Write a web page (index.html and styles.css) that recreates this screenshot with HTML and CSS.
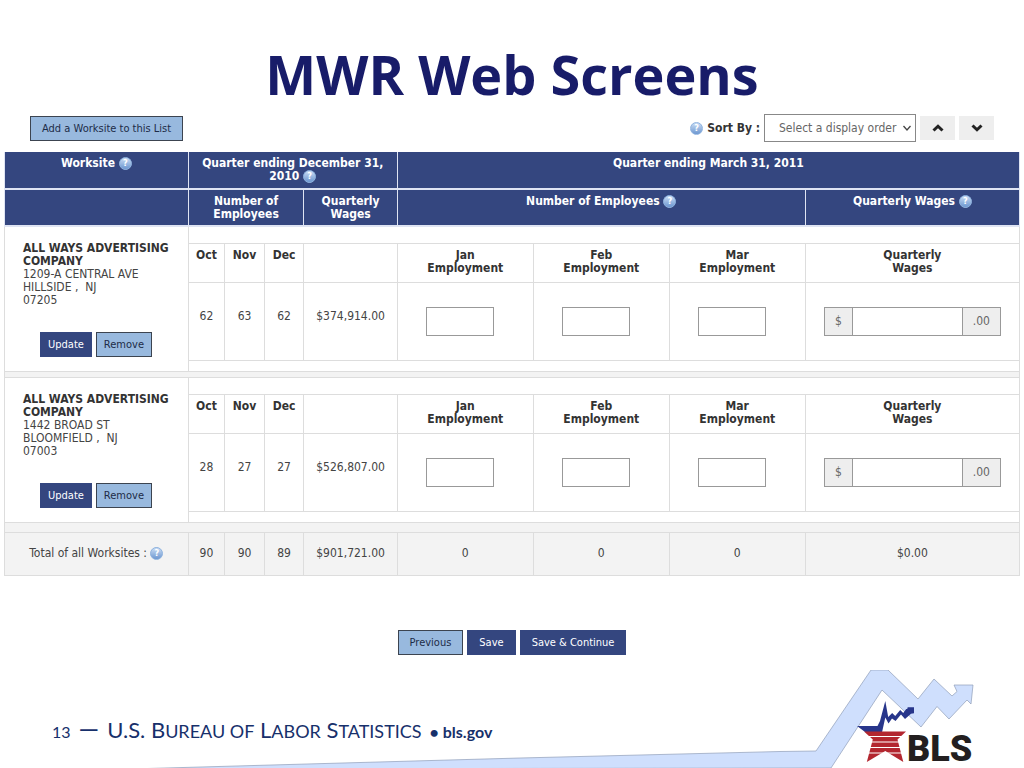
FILE: index.html
```html
<!DOCTYPE html>
<html lang="en">
<head>
<meta charset="utf-8">
<meta name="viewport" content="width=device-width, initial-scale=1">
<title>MWR Web Screens</title>
<link rel="stylesheet" href="styles.css">
</head>
<body>
<div class="slide">
  <h1 class="title">MWR Web Screens</h1>
  <main class="screen">
    <div class="toolbar">
      <button type="button" class="btn btn-light">Add a Worksite to this List</button>
      <div class="sort">
        <button type="button" class="help" aria-label="Help with sorting">?</button>
        <label class="sort-label" for="sort">Sort By :</label>
        <div class="select-wrap">
          <select id="sort" class="select"><option>Select a display order</option></select>
          <svg class="select-arrow" viewBox="0 0 10 10" aria-hidden="true"><path d="M1.500 3l3.500 4 3.500-4" fill="none" stroke="#444" stroke-width="1.300"/></svg>
        </div>
        <button type="button" class="order" aria-label="Ascending"><svg viewBox="0 0 12 10"><path d="M1.500 7.500L6 3.200l4.500 4.300" fill="none" stroke="#222" stroke-width="3"/></svg></button>
        <button type="button" class="order" aria-label="Descending"><svg viewBox="0 0 12 10"><path d="M1.500 2.500L6 6.800l4.500-4.300" fill="none" stroke="#222" stroke-width="3"/></svg></button>
      </div>
    </div>

    <table class="grid">
      <colgroup>
        <col class="c-site"><col class="c-oct"><col class="c-month"><col class="c-month"><col class="c-wage"><col class="c-emp"><col class="c-emp"><col class="c-emp"><col>
      </colgroup>
      <thead>
        <tr class="head">
          <th>Worksite <button type="button" class="help" aria-label="Help with worksite">?</button></th>
          <th colspan="4">Quarter ending December 31,<br>2010 <button type="button" class="help" aria-label="Help with prior quarter">?</button></th>
          <th colspan="4">Quarter ending March 31, 2011</th>
        </tr>
        <tr class="head">
          <th></th>
          <th colspan="3">Number of<br>Employees</th>
          <th>Quarterly<br>Wages</th>
          <th colspan="3">Number of Employees <button type="button" class="help" aria-label="Help with employees">?</button></th>
          <th>Quarterly Wages <button type="button" class="help" aria-label="Help with wages">?</button></th>
        </tr>
      </thead>
      <tbody>
        <tr class="space-top"><td rowspan="4" class="site">
          <address class="address"><strong>ALL WAYS ADVERTISING COMPANY</strong><br>1209-A CENTRAL AVE<br>HILLSIDE ,&nbsp; NJ<br>07205</address>
          <div class="site-actions"><button type="button" class="btn btn-dark">Update</button><button type="button" class="btn btn-light">Remove</button></div>
        </td><td colspan="8"></td></tr>
        <tr class="labels"><th>Oct</th><th>Nov</th><th>Dec</th><th></th><th>Jan<br>Employment</th><th>Feb<br>Employment</th><th>Mar<br>Employment</th><th>Quarterly<br>Wages</th></tr>
        <tr class="values"><td>62</td><td>63</td><td>62</td><td>$374,914.00</td>
          <td><input class="num" type="text" aria-label="January employment"></td>
          <td><input class="num" type="text" aria-label="February employment"></td>
          <td><input class="num" type="text" aria-label="March employment"></td>
          <td><div class="money"><span>$</span><input type="text" aria-label="Quarterly wages"><span>.00</span></div></td></tr>
        <tr class="space-bottom"><td colspan="8"></td></tr>
        <tr class="band"><td colspan="9"></td></tr>
      </tbody>
      <tbody>
        <tr class="space-top"><td rowspan="4" class="site">
          <address class="address"><strong>ALL WAYS ADVERTISING COMPANY</strong><br>1442 BROAD ST<br>BLOOMFIELD ,&nbsp; NJ<br>07003</address>
          <div class="site-actions"><button type="button" class="btn btn-dark">Update</button><button type="button" class="btn btn-light">Remove</button></div>
        </td><td colspan="8"></td></tr>
        <tr class="labels"><th>Oct</th><th>Nov</th><th>Dec</th><th></th><th>Jan<br>Employment</th><th>Feb<br>Employment</th><th>Mar<br>Employment</th><th>Quarterly<br>Wages</th></tr>
        <tr class="values"><td>28</td><td>27</td><td>27</td><td>$526,807.00</td>
          <td><input class="num" type="text" aria-label="January employment"></td>
          <td><input class="num" type="text" aria-label="February employment"></td>
          <td><input class="num" type="text" aria-label="March employment"></td>
          <td><div class="money"><span>$</span><input type="text" aria-label="Quarterly wages"><span>.00</span></div></td></tr>
        <tr class="space-bottom"><td colspan="8"></td></tr>
        <tr class="band band-tall"><td colspan="9"></td></tr>
      </tbody>
      <tfoot>
        <tr class="total"><td>Total of all Worksites : <button type="button" class="help" aria-label="Help with totals">?</button></td><td>90</td><td>90</td><td>89</td><td>$901,721.00</td><td>0</td><td>0</td><td>0</td><td>$0.00</td></tr>
      </tfoot>
    </table>

    <div class="actions">
      <button type="button" class="btn btn-light">Previous</button>
      <button type="button" class="btn btn-dark">Save</button>
      <button type="button" class="btn btn-dark">Save &amp; Continue</button>
    </div>
  </main>

  <footer class="footer">
    <svg class="art" viewBox="0 0 1024 98" preserveAspectRatio="xMaxYMax meet" role="img" aria-label="BLS">
      <path d="M130 99L520 88 780 81.500 816 81 871 0h17l30 29 16-20 18 17 5-4.500-3-6.500h19l-2 19-4-4-18 19-12-12.500-16 20.500-39-37-51 78z" fill="#cfdffd" stroke="#8f9db8" stroke-width=".7"/>
      <path d="M857 56h20.500l2.500-5 5.300-20 2.900 16 4-4 3 3 5-6 3 3 3-4h1l.5-1.700h6.300v6l-3 .5-6 5.200-4-4.500-5.500 6.500-3.500-2.500-3.500 5-3.200-6-3.200 14.500h-17z" fill="#28368b"/>
      <path d="M864 61.500h42l-8.500 8 5.800 22.500-18-11-18.500 11 6-22.500z" fill="#b3262f"/>
      <path d="M860 66.500h50M860 72h50M860 77.500h50M860 83h50" stroke="#fff" stroke-width="1.200"/>
      <text class="logo-text" x="907" y="91">BLS</text>
    </svg>
    <p class="caption">
      <span class="page">13</span>
      <span class="dash">—</span>
      <span class="agency">U.S. B<small>ureau of</small> L<small>abor</small> S<small>tatistics</small></span>
      <b class="domain">• bls.gov</b>
    </p>
  </footer>
</div>
</body>
</html>
```
FILE: styles.css
```css
* { box-sizing: border-box; }

body {
  margin: 0;
  background: #fff;
  color: #444;
  font: 12px/13px "DejaVu Sans Condensed", "DejaVu Sans", sans-serif;
}

button, input, select { font: inherit; margin: 0; }

.slide { display: flex; flex-direction: column; min-height: 100vh; }

.title {
  margin: 0;
  padding-top: 38px;
  color: #181c69;
  font: 700 54px/72px "Open Sans", sans-serif;
  text-align: center;
}

.screen { padding: 3px 4px 0; }

.toolbar {
  display: flex;
  justify-content: space-between;
  align-items: center;
  height: 30px;
  margin: 0 26px 9px;
}

.sort { display: flex; align-items: center; gap: 4px; }
.sort-label { color: #333; font-weight: 700; }

.help {
  display: inline-block;
  width: 13px;
  height: 13px;
  padding: 0;
  border: 1px solid #8fb3df;
  border-radius: 50%;
  background: linear-gradient(#c9dcf4, #6d97d0);
  color: #fff;
  font-size: 9px;
  font-weight: 700;
  line-height: 11px;
  text-align: center;
  vertical-align: top;
}

.select-wrap { display: grid; align-items: center; }
.select {
  grid-area: 1 / 1;
  width: 152px;
  height: 28px;
  padding: 0 14px;
  border: 1px solid #888;
  border-radius: 0;
  background: #fff;
  color: #666;
  appearance: none;
}
.select-arrow {
  grid-area: 1 / 1;
  justify-self: end;
  width: 10px;
  height: 10px;
  margin-right: 4px;
  pointer-events: none;
}

.order {
  display: grid;
  place-items: center;
  width: 35px;
  height: 24px;
  padding: 0;
  border: 0;
  background: #eee;
}
.order svg { width: 12px; height: 10px; }

.btn { height: 25px; padding: 0 11px; border: 1px solid #34467f; font-size: 11px; white-space: nowrap; }
.btn-light { border-color: #3c4450; background: #98b9de; color: #1d2c48; }
.btn-dark { background: #34467f; color: #fff; }

.grid { width: 100%; border-collapse: collapse; table-layout: fixed; text-align: center; }
.c-site { width: 18.1%; }
.c-oct { width: 3.6%; }
.c-month { width: 3.9%; }
.c-wage { width: 9.2%; }
.c-emp { width: 13.4%; }

.grid th, .grid td { padding: 0; border: 1px solid #ddd; }

.head { height: 37px; }
.grid .head th {
  padding: 5px 2px 0;
  border: 2px solid #dfe4f3;
  border-width: 0 1px 2px;
  background: #34467f;
  color: #fff;
  vertical-align: top;
}

.space-top { height: 17px; }
.labels { height: 39px; color: #333; }
.labels th { vertical-align: top; }
.grid .labels th { padding-top: 5px; }
.values { height: 78px; }
.values td:nth-child(-n+4) { padding-bottom: 9px; }
.space-bottom { height: 11px; }
.band { height: 6px; background: #f3f3f3; }
.band-tall { height: 10px; }
.total { height: 43px; background: #f3f3f3; }

.grid .site { padding: 15px 10px 0 18px; text-align: left; vertical-align: top; }
.address { font-style: normal; }
.address strong { color: #333; }
.site-actions { display: flex; gap: 4px; margin: 25px 0 0 17px; }
.site-actions .btn { padding: 0 7px; }

.num, .money { height: 29px; border: 1px solid #999; background: #fff; }
.num { display: block; width: 50%; margin: 0 auto 0 21%; padding: 0 6px; }
.money { display: flex; width: 83%; margin: 0 auto; line-height: 27px; }
.money span { flex: none; padding: 0 10px; background: #eee; color: #666; }
.money input { flex: 1; min-width: 0; border: 1px solid #999; border-width: 0 1px; padding: 0 6px; }

.actions { display: flex; justify-content: center; gap: 4px; padding-top: 54px; }

.footer { display: grid; align-items: end; margin-top: auto; }
.art { grid-area: 1 / 1; display: block; width: 100%; }
.logo-text { fill: #231f20; font: 900 36px Roboto, sans-serif; }
.caption {
  grid-area: 1 / 1;
  display: flex;
  align-items: baseline;
  gap: 8px;
  margin: 0;
  padding: 0 52px 22px;
  color: #17306b;
  font: 22px/28px Lato, sans-serif;
}
.page { font-size: 16px; }
.dash { font-size: 26px; }
.agency small { font-size: 18px; text-transform: uppercase; }
.domain { font-size: 16px; }
```
